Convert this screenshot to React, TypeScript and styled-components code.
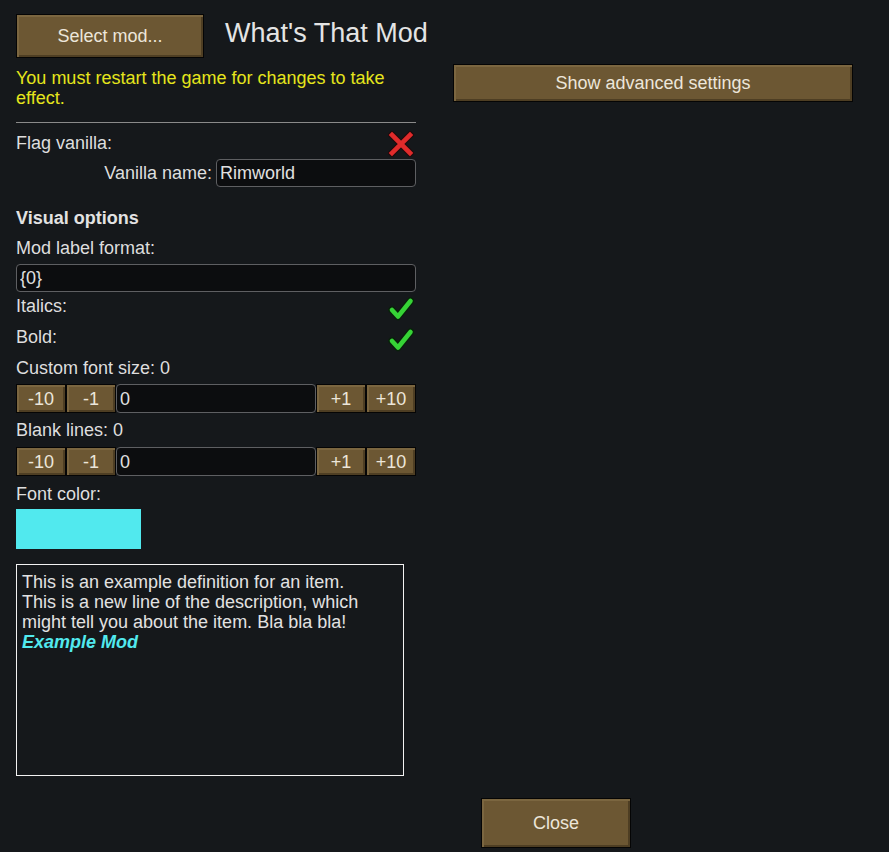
import React from "react";
import styled, { createGlobalStyle } from "styled-components";

const Global = createGlobalStyle`
  html, body {
    margin: 0;
    padding: 0;
    background: #15181b;
  }
  body {
    font-family: "Liberation Sans", Arial, sans-serif;
    font-size: 18px;
    line-height: 20px;
    color: #dedede;
  }
  * { box-sizing: border-box; }
`;

const Page = styled.div`
  width: 889px;
  min-height: 852px;
  padding: 14px 0 0 16px;
  display: flex;
  flex-direction: column;
`;

const Header = styled.div`
  display: flex;
  align-items: flex-start;
  gap: 21px;
`;

const Title = styled.div`
  margin-top: 4px;
  font-size: 27px;
  line-height: 30px;
  color: #e4e4e4;
  white-space: nowrap;
`;

const BrownButton = styled.button<{ $w: number; $h: number }>`
  width: ${(p) => p.$w}px;
  height: ${(p) => p.$h}px;
  flex: none;
  padding: 0;
  background: #6c5733;
  border: 1px solid #050505;
  box-shadow: inset 3px 3px 0 -1px #7b6640, inset -3px -3px 0 -1px #4e3e23;
  color: #ece6da;
  font-family: "Liberation Sans", Arial, sans-serif;
  font-size: 18px;
  line-height: 20px;
  text-align: center;
  cursor: pointer;
`;

const Columns = styled.div`
  margin-top: 6px;
  display: flex;
  align-items: flex-start;
  gap: 37px;
`;

const LeftCol = styled.div`
  width: 400px;
  display: flex;
  flex-direction: column;
`;

const RightCol = styled.div`
  display: flex;
  flex-direction: column;
`;

const Notice = styled.div`
  margin-top: 4px;
  color: #e5e51c;
`;

const Divider = styled.div`
  margin-top: 14px;
  height: 1px;
  background: #8a8a8a;
`;

const ToggleRow = styled.div<{ $mt: number; $h: number }>`
  margin-top: ${(p) => p.$mt}px;
  height: ${(p) => p.$h}px;
  display: flex;
  justify-content: space-between;
  align-items: flex-start;
  padding-right: 2px;
`;

const ToggleLabel = styled.span<{ $pt: number }>`
  padding-top: ${(p) => p.$pt}px;
`;

const IconBox = styled.span<{ $mt: number }>`
  margin-top: ${(p) => p.$mt}px;
  display: flex;
  width: 26px;
  height: 26px;
`;

const NameRow = styled.div`
  margin-top: 2px;
  display: flex;
  justify-content: flex-end;
  align-items: center;
  gap: 4px;
`;

const TextField = styled.input<{ $w: number; $h: number; $mt?: number }>`
  width: ${(p) => p.$w}px;
  height: ${(p) => p.$h}px;
  margin-top: ${(p) => p.$mt ?? 0}px;
  flex: none;
  background: #0c0d0f;
  border: 1px solid #5e5f62;
  border-radius: 4px;
  padding: 1px 3px 0;
  color: #e0e0e0;
  font-family: "Liberation Sans", Arial, sans-serif;
  font-size: 18px;
  line-height: 20px;
  outline: none;
`;

const SectionTitle = styled.div`
  margin-top: 21px;
  font-weight: bold;
  color: #e2e2e2;
`;

const Label = styled.div<{ $mt: number }>`
  margin-top: ${(p) => p.$mt}px;
`;

const StepperRow = styled.div<{ $mt: number }>`
  margin-top: ${(p) => p.$mt}px;
  display: grid;
  grid-template-columns: 50px 50px 200px 50px 50px;
  height: 29px;
`;

const Swatch = styled.div<{ $color: string }>`
  margin-top: 5px;
  width: 125px;
  height: 40px;
  background: ${(p) => p.$color};
`;

const Preview = styled.div`
  margin-top: 15px;
  width: 388px;
  height: 212px;
  border: 1px solid #f2f2f2;
  padding: 7px 5px;
  color: #e2e2e2;
  white-space: pre-line;
`;

const ModName = styled.span<{ $color: string }>`
  display: block;
  font-weight: bold;
  font-style: italic;
  color: ${(p) => p.$color};
`;

const Footer = styled.div`
  margin-top: 22px;
  display: flex;
  padding-left: 465px;
`;

const XIcon = () => (
  <svg width="26" height="26" viewBox="0 0 26 26">
    <g strokeLinecap="square">
      <path d="M4 4 L22 22 M22 4 L4 22" stroke="rgba(40,0,0,0.55)" strokeWidth="7" fill="none" />
      <path d="M4 4 L22 22 M22 4 L4 22" stroke="#e02b2b" strokeWidth="4.6" fill="none" />
    </g>
  </svg>
);

const CheckIcon = () => (
  <svg width="26" height="26" viewBox="0 0 26 26">
    <g strokeLinecap="round" strokeLinejoin="round" fill="none">
      <path d="M4 14 L10 20.5 L22.5 5" stroke="rgba(0,40,0,0.6)" strokeWidth="7.5" />
      <path d="M4 14 L10 20.5 L22.5 5" stroke="#36d336" strokeWidth="4.6" />
    </g>
  </svg>
);

const Stepper: React.FC<{ mt: number; value: string }> = ({ mt, value }) => (
  <StepperRow $mt={mt}>
    <BrownButton $w={50} $h={29}>-10</BrownButton>
    <BrownButton $w={50} $h={29}>-1</BrownButton>
    <TextField $w={200} $h={29} readOnly defaultValue={value} />
    <BrownButton $w={50} $h={29}>+1</BrownButton>
    <BrownButton $w={50} $h={29}>+10</BrownButton>
  </StepperRow>
);

const FONT_COLOR = "#51e9ee";

export default function App() {
  return (
    <>
      <Global />
      <Page>
        <Header>
          <BrownButton $w={188} $h={44}>Select mod...</BrownButton>
          <Title>What's That Mod</Title>
        </Header>
        <Columns>
          <LeftCol>
            <Notice>You must restart the game for changes to take effect.</Notice>
            <Divider />
            <ToggleRow $mt={8} $h={26}>
              <ToggleLabel $pt={2}>Flag vanilla:</ToggleLabel>
              <IconBox $mt={0}>
                <XIcon />
              </IconBox>
            </ToggleRow>
            <NameRow>
              <span>Vanilla name:</span>
              <TextField $w={200} $h={28} readOnly defaultValue="Rimworld" />
            </NameRow>
            <SectionTitle>Visual options</SectionTitle>
            <Label $mt={10}>Mod label format:</Label>
            <TextField $w={400} $h={28} $mt={6} readOnly defaultValue="{0}" />
            <ToggleRow $mt={4} $h={31}>
              <ToggleLabel $pt={0}>Italics:</ToggleLabel>
              <IconBox $mt={0}>
                <CheckIcon />
              </IconBox>
            </ToggleRow>
            <ToggleRow $mt={0} $h={31}>
              <ToggleLabel $pt={0}>Bold:</ToggleLabel>
              <IconBox $mt={0}>
                <CheckIcon />
              </IconBox>
            </ToggleRow>
            <Label $mt={0}>Custom font size: 0</Label>
            <Stepper mt={6} value="0" />
            <Label $mt={7}>Blank lines: 0</Label>
            <Stepper mt={7} value="0" />
            <Label $mt={8}>Font color:</Label>
            <Swatch $color={FONT_COLOR} />
            <Preview>
              {"This is an example definition for an item.\nThis is a new line of the description, which might tell you about the item. Bla bla bla!"}
              <ModName $color={FONT_COLOR}>Example Mod</ModName>
            </Preview>
          </LeftCol>
          <RightCol>
            <BrownButton $w={400} $h={38}>Show advanced settings</BrownButton>
          </RightCol>
        </Columns>
        <Footer>
          <BrownButton $w={150} $h={50}>Close</BrownButton>
        </Footer>
      </Page>
    </>
  );
}
